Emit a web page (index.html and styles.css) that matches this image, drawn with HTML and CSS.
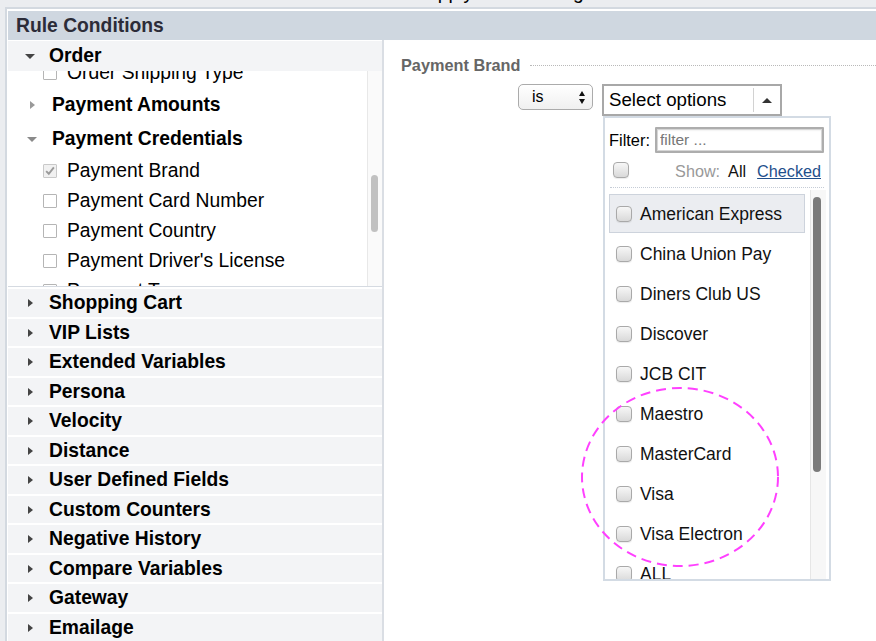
FILE: index.html
```html
<!DOCTYPE html>
<html lang="en">
<head>
<meta charset="utf-8">
<title>Rule Conditions</title>
<link rel="stylesheet" href="styles.css">
</head>
<body>
  <div class="topbar"><span class="topbar-title">Apply Rule Setting</span></div>

  <div class="panel">
    <div class="panel-head">Rule Conditions</div>
    <div class="panel-body">

      <aside class="tree">
        <div class="tree-head"><span class="twisty"><i class="tri-down dark"></i></span>Order</div>

        <div class="scroller">
          <div class="scroll-content">
            <div class="leaf"><span class="box"></span>Order Shipping Type</div>
            <div class="sub"><span class="twisty"><i class="tri-right light"></i></span>Payment Amounts</div>
            <div class="sub"><span class="twisty"><i class="tri-down light"></i></span>Payment Credentials</div>
            <div class="leaf"><span class="box is-on"><svg viewBox="0 0 14 14" width="12" height="12"><path d="M2.5 7.2 L5.6 10.2 L11.5 2.8" fill="none" stroke="#9a9a9a" stroke-width="2.2"/></svg></span>Payment Brand</div>
            <div class="leaf"><span class="box"></span>Payment Card Number</div>
            <div class="leaf"><span class="box"></span>Payment Country</div>
            <div class="leaf"><span class="box"></span>Payment Driver's License</div>
            <div class="leaf"><span class="box"></span>Payment Type</div>
          </div>
          <div class="vtrack"><div class="vthumb"></div></div>
        </div>

        <ul class="groups">
          <li><span class="twisty"><i class="tri-right dark"></i></span>Shopping Cart</li>
          <li><span class="twisty"><i class="tri-right dark"></i></span>VIP Lists</li>
          <li><span class="twisty"><i class="tri-right dark"></i></span>Extended Variables</li>
          <li><span class="twisty"><i class="tri-right dark"></i></span>Persona</li>
          <li><span class="twisty"><i class="tri-right dark"></i></span>Velocity</li>
          <li><span class="twisty"><i class="tri-right dark"></i></span>Distance</li>
          <li><span class="twisty"><i class="tri-right dark"></i></span>User Defined Fields</li>
          <li><span class="twisty"><i class="tri-right dark"></i></span>Custom Counters</li>
          <li><span class="twisty"><i class="tri-right dark"></i></span>Negative History</li>
          <li><span class="twisty"><i class="tri-right dark"></i></span>Compare Variables</li>
          <li><span class="twisty"><i class="tri-right dark"></i></span>Gateway</li>
          <li><span class="twisty"><i class="tri-right dark"></i></span>Emailage</li>
        </ul>
      </aside>

      <main class="editor">
        <div class="field-title"><span class="label">Payment Brand</span><span class="rule"></span></div>

        <div class="condition">
          <div class="op">
            <span>is</span>
            <span class="updown"><i class="ud-up"></i><i class="ud-down"></i></span>
          </div>

          <div class="multi">
            <div class="multi-btn">
              <span class="txt">Select options</span>
              <span class="sep"></span>
              <span class="caret"><i class="caret-up"></i></span>
            </div>

            <div class="menu">
              <div class="filter-row">
                <label for="flt">Filter:</label>
                <input id="flt" type="text" placeholder="filter ...">
              </div>
              <div class="show-row">
                <span class="cbx"></span>
                <span class="show-links">
                  <span class="show">Show:</span>
                  <span class="all">All</span>
                  <a class="link-checked" href="#">Checked</a>
                </span>
              </div>
              <div class="menu-sep"></div>
              <div class="opt-list">
                <ul class="opts">
                  <li class="hover"><span class="cbx"></span>American Express</li>
                  <li><span class="cbx"></span>China Union Pay</li>
                  <li><span class="cbx"></span>Diners Club US</li>
                  <li><span class="cbx"></span>Discover</li>
                  <li><span class="cbx"></span>JCB CIT</li>
                  <li><span class="cbx"></span>Maestro</li>
                  <li><span class="cbx"></span>MasterCard</li>
                  <li><span class="cbx"></span>Visa</li>
                  <li><span class="cbx"></span>Visa Electron</li>
                  <li><span class="cbx"></span>ALL</li>
                </ul>
                <div class="otrack"><div class="othumb"></div></div>
              </div>
            </div>
          </div>
        </div>
      </main>

    </div>
  </div>

  <svg class="markup" width="876" height="641" viewBox="0 0 876 641">
    <ellipse cx="680" cy="477" rx="98" ry="89" fill="none" stroke="#ff40ff" stroke-width="2" stroke-dasharray="10 6"/>
  </svg>
</body>
</html>
```

FILE: styles.css
```css
* { box-sizing: border-box; }

html, body {
  margin: 0;
  padding: 0;
}

body {
  width: 876px;
  height: 641px;
  overflow: hidden;
  position: relative;
  background: #ebedf0;
  font-family: "Liberation Sans", Arial, Helvetica, sans-serif;
  color: #000;
}

/* page title strip above the panel */
.topbar {
  height: 7px;
  overflow: hidden;
  padding-left: 425px;
}
.topbar-title {
  display: block;
  font-size: 19.3px;
  line-height: 22px;
  margin-top: -18px;
  white-space: nowrap;
}

/* main panel */
.panel {
  margin-left: 5px;
  height: 634px;
  border-top: 2px solid #d3d9e0;
  border-left: 2px solid #d3d9e0;
  padding: 2px 0 0 1px;
  background: #fff;
  display: flex;
  flex-direction: column;
}
.panel-head {
  height: 29px;
  flex: none;
  background: #cfd7e0;
  color: #2c2c38;
  font-weight: bold;
  font-size: 19.3px;
  line-height: 29px;
  padding-left: 8px;
}
.panel-body {
  flex: 1;
  display: flex;
  min-height: 0;
}

/* condition tree */
.tree {
  width: 376px;
  flex: none;
  border-right: 2px solid #dadee4;
  padding-top: 1px;
  display: flex;
  flex-direction: column;
}
.twisty {
  width: 12px;
  flex: none;
  display: flex;
  justify-content: center;
  align-items: center;
}
.tri-right {
  width: 0;
  height: 0;
  border-top: 4px solid transparent;
  border-bottom: 4px solid transparent;
  border-left: 5px solid #444;
}
.tri-down {
  width: 0;
  height: 0;
  border-left: 5px solid transparent;
  border-right: 5px solid transparent;
  border-top: 5px solid #444;
}
.tri-right.light { border-left-color: #999; }
.tri-down.light { border-top-color: #8a8a8a; }

.tree-head {
  height: 30px;
  flex: none;
  background: #f3f4f6;
  display: flex;
  align-items: center;
  padding-left: 16px;
  font-weight: bold;
  font-size: 19.3px;
}
.tree-head .twisty { margin-right: 13px; }

.scroller {
  height: 216px;
  flex: none;
  display: flex;
  overflow: hidden;
  border-bottom: 1px solid #d5dae1;
}
.scroll-content {
  flex: 1;
  align-self: flex-start;
  margin-top: -13px;
}
.leaf {
  height: 30px;
  display: flex;
  align-items: center;
  padding-left: 35px;
  font-size: 19.3px;
  white-space: nowrap;
}
.box {
  width: 14px;
  height: 14px;
  flex: none;
  margin-right: 10px;
  border: 1px solid #b5b5b5;
  border-radius: 1px;
  background: #fff;
  display: flex;
  align-items: center;
  justify-content: center;
}
.box.is-on {
  background: #f1f1f1;
  border-color: #c9c9c9;
}
.sub {
  height: 34px;
  display: flex;
  align-items: center;
  padding-left: 18px;
  font-weight: bold;
  font-size: 19.3px;
}
.sub .twisty { margin-right: 14px; }

.vtrack {
  width: 15px;
  flex: none;
  border-left: 1px solid #e8e8e8;
  background: #fafafa;
  padding: 104px 0 0 3px;
}
.vthumb {
  width: 7px;
  height: 57px;
  border-radius: 4px;
  background: #c1c1c1;
}

.groups {
  list-style: none;
  margin: 0;
  padding: 0;
}
.groups li {
  height: 29.5px;
  border-top: 2px solid #fff;
  background: #f3f4f6;
  display: flex;
  align-items: center;
  padding-left: 16px;
  padding-top: 1px;
  font-weight: bold;
  font-size: 19.3px;
}
.groups li .twisty { margin-right: 13px; }

/* editor on the right */
.editor {
  flex: 1;
  padding: 15px 0 0 17px;
}
.field-title {
  display: flex;
  align-items: center;
  height: 20px;
}
.field-title .label {
  font-weight: bold;
  font-size: 16.3px;
  color: #666;
}
.field-title .rule {
  flex: 1;
  margin-left: 10px;
  border-top: 1px dotted #b9b9b9;
}

.condition {
  display: flex;
  align-items: flex-start;
  margin: 9px 0 0 117px;
}
.op {
  width: 75px;
  height: 26px;
  border: 1px solid #ababab;
  border-radius: 5px;
  background: linear-gradient(#fff, #f0f0f0);
  display: flex;
  align-items: center;
  justify-content: space-between;
  padding: 0 7px 0 13px;
  font-size: 16px;
}
.updown {
  display: flex;
  flex-direction: column;
  gap: 3px;
}
.ud-up, .ud-down {
  width: 0;
  height: 0;
  border-left: 3.5px solid transparent;
  border-right: 3.5px solid transparent;
}
.ud-up { border-bottom: 5px solid #111; }
.ud-down { border-top: 5px solid #111; }

.multi {
  position: relative;
  margin-left: 9px;
}
.multi-btn {
  width: 180px;
  height: 32px;
  border: 2px solid #a8a8a8;
  background: #fff;
  display: flex;
  align-items: center;
  padding-left: 5px;
  font-size: 18.7px;
}
.multi-btn .txt { flex: 1; white-space: nowrap; margin-top: -1px; }
.multi-btn .sep {
  width: 1px;
  height: 24px;
  background: #d2d2d2;
}
.multi-btn .caret {
  width: 26px;
  display: flex;
  justify-content: center;
}
.caret-up {
  width: 0;
  height: 0;
  border-left: 5px solid transparent;
  border-right: 5px solid transparent;
  border-bottom: 5px solid #333;
}

/* open dropdown */
.menu {
  position: absolute;
  top: 32px;
  left: 1px;
  width: 228px;
  height: 465px;
  border: 2px solid #d3dbe4;
  background: #fff;
  z-index: 2;
}
.filter-row {
  display: flex;
  align-items: center;
  padding: 9px 5px 0 4px;
  font-size: 16.4px;
}
.filter-row input {
  flex: 1;
  min-width: 0;
  height: 26px;
  margin: 0 0 0 5px;
  border: 2px solid #adadad;
  border-radius: 1px;
  box-shadow: inset 0 0 0 1px #d6d6d6, inset 0 1px 2px rgba(0, 0, 0, 0.15);
  padding: 0 3px;
  font: 15.5px "Liberation Sans", Arial, sans-serif;
  color: #333;
  outline: none;
}
.filter-row input::placeholder { color: #777; }

.show-row {
  display: flex;
  align-items: center;
  height: 18px;
  margin-top: 8px;
  padding: 0 8px;
  font-size: 16.2px;
}
.show-links {
  margin-left: auto;
  display: flex;
  align-items: center;
  padding-top: 3px;
}
.show { color: #999; }
.all { margin-left: 8px; color: #111; }
.link-checked {
  margin-left: 11px;
  color: #1f4f8c;
  text-decoration: underline;
}
.menu-sep {
  margin: 8px 5px 0;
  border-top: 1px dotted #c5ccd6;
}

.cbx {
  width: 16px;
  height: 16px;
  flex: none;
  border: 1px solid #a9a9a9;
  border-radius: 4px;
  background: linear-gradient(#f7f7f7, #d9d9d9);
  box-shadow: 0 1px 1px rgba(0, 0, 0, 0.08);
}

.opt-list {
  display: flex;
  height: 389px;
  margin-top: 2px;
  padding-left: 4px;
  overflow: hidden;
}
.opts {
  width: 196px;
  flex: none;
  list-style: none;
  margin: 0;
  padding: 4px 0 0;
}
.opts li {
  height: 39px;
  margin-bottom: 1px;
  border: 1px solid transparent;
  display: flex;
  align-items: center;
  padding-left: 6px;
  padding-top: 1px;
  font-size: 17.5px;
  color: #111;
  white-space: nowrap;
}
.opts li.hover {
  background: #ebedf1;
  border-color: #cdd3dc;
}
.opts .cbx { margin-right: 8px; }

.otrack {
  width: 16px;
  flex: none;
  margin-left: 5px;
  border-left: 1px solid #e6e6e6;
  background: #f7f7f7;
  padding: 7px 0 0 2px;
}
.othumb {
  width: 8px;
  height: 275px;
  border-radius: 4px;
  background: #7b7b7b;
}

/* hand-drawn highlight ring over the card list */
.markup {
  position: absolute;
  top: 0;
  left: 0;
  pointer-events: none;
  z-index: 10;
}
```
